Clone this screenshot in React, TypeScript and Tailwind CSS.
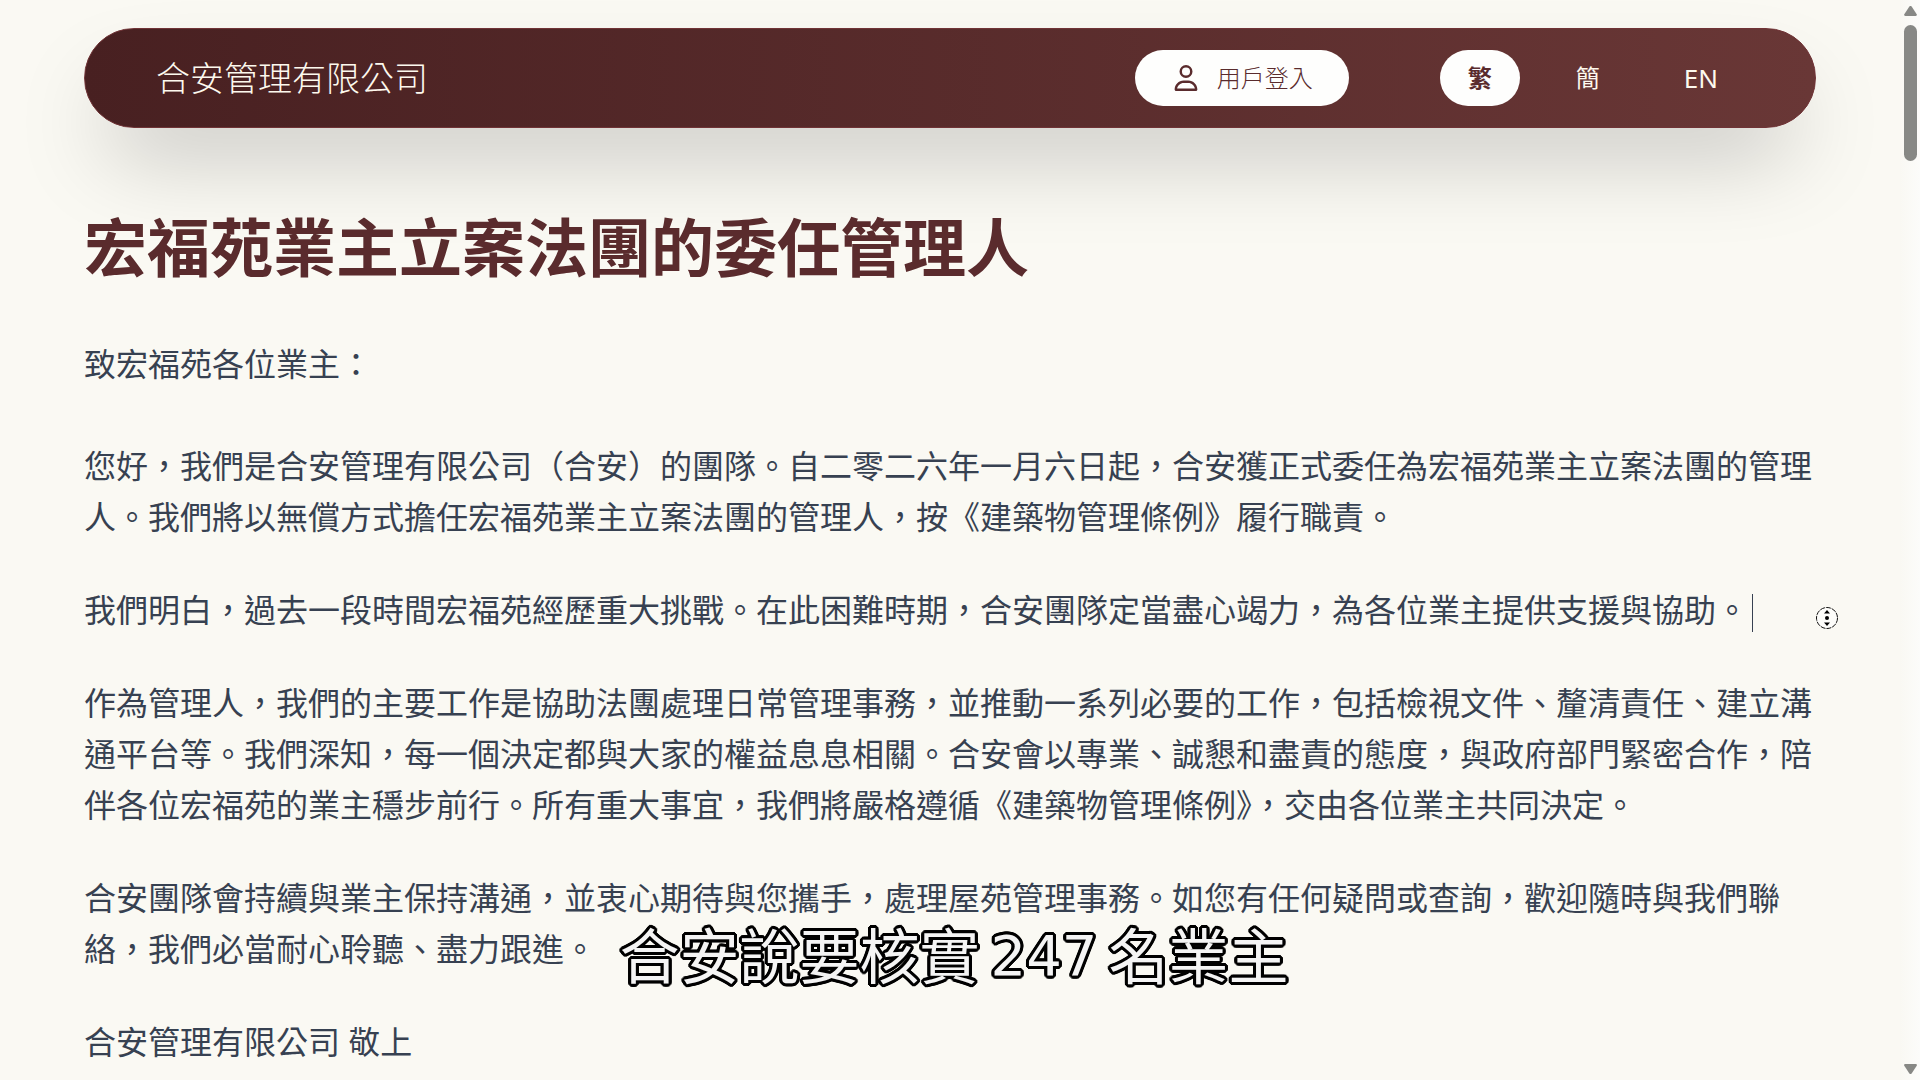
import React, { useState } from 'react';
import { FaRegUser } from 'react-icons/fa6';

const LANGUAGES = [
  { id: 'tc', label: '繁' },
  { id: 'sc', label: '簡' },
  { id: 'en', label: 'EN' },
];

const PARAGRAPHS = [
  '您好，我們是合安管理有限公司（合安）的團隊。自二零二六年一月六日起，合安獲正式委任為宏福苑業主立案法團的管理人。我們將以無償方式擔任宏福苑業主立案法團的管理人，按《建築物管理條例》履行職責。',
  '我們明白，過去一段時間宏福苑經歷重大挑戰。在此困難時期，合安團隊定當盡心竭力，為各位業主提供支援與協助。',
  '作為管理人，我們的主要工作是協助法團處理日常管理事務，並推動一系列必要的工作，包括檢視文件、釐清責任、建立溝通平台等。我們深知，每一個決定都與大家的權益息息相關。合安會以專業、誠懇和盡責的態度，與政府部門緊密合作，陪伴各位宏福苑的業主穩步前行。所有重大事宜，我們將嚴格遵循《建築物管理條例》，交由各位業主共同決定。',
  '合安團隊會持續與業主保持溝通，並衷心期待與您攜手，處理屋苑管理事務。如您有任何疑問或查詢，歡迎隨時與我們聯絡，我們必當耐心聆聽、盡力跟進。',
  '合安管理有限公司 敬上',
];

const CARET_PARAGRAPH = 1;

const Header: React.FC = () => {
  const [lang, setLang] = useState('tc');

  return (
    <header className="flex items-center justify-between rounded-full border border-[#703336] bg-gradient-to-r from-[#482021] to-[#693736] h-[100px] pl-[71px] pr-[69px] text-[#fdf9ee] shadow-[0_44px_88px_-21px_rgba(0,0,0,0.25)]">
      <a href="#" className="text-[34px] leading-[56px] font-light">合安管理有限公司</a>
      <div className="flex items-center gap-[91px]">
        <button className="flex h-14 items-center gap-[18px] rounded-full bg-[#fefefd] pl-[38px] pr-9 text-2xl font-light text-[#5a2b2d]">
          <FaRegUser className="size-[26px]" />
          用戶登入
        </button>
        <nav className="flex items-center gap-7">
          {LANGUAGES.map(item => (
            <button
              key={item.id}
              onClick={() => setLang(item.id)}
              className={`h-14 rounded-full px-7 ${item.id === 'en' ? 'text-[26px]' : 'text-2xl'} ${lang === item.id ? 'bg-[#fefefd] font-bold text-[#5a2b2d]' : 'font-normal'}`}
            >
              {item.label}
            </button>
          ))}
        </nav>
      </div>
    </header>
  );
};

const Scrollbar: React.FC = () => (
  <div className="flex w-5 shrink-0 flex-col items-end bg-gradient-to-r from-[#f9f8f3] to-[#fcfcfa] pr-[3px] text-[#878885]">
    <svg viewBox="0 0 13 10" className="mt-1.5 h-[10px] w-[13px]" fill="currentColor">
      <path d="M5.2.8a1.6 1.6 0 0 1 2.6 0l4.9 7.4c.5.8 0 1.8-1 1.8H1.3c-1 0-1.5-1-1-1.8z" />
    </svg>
    <div className="mt-[9px] h-[136px] w-[13px] rounded-full bg-[#878885]" />
    <svg viewBox="0 0 13 10" className="mt-auto mb-1.5 h-[10px] w-[13px]" fill="currentColor">
      <path d="M5.2 9.2a1.6 1.6 0 0 0 2.6 0l4.9-7.4c.5-.8 0-1.8-1-1.8H1.3c-1 0-1.5 1-1 1.8z" />
    </svg>
  </div>
);

const ScrollCursor: React.FC = () => (
  <svg viewBox="0 0 22 22" className="absolute top-[607px] right-[82px] size-[22px]">
    <circle cx="11" cy="11" r="10.5" fill="#fff" fillOpacity="0.6" stroke="#111" strokeWidth="1" strokeDasharray="5 1" />
    <circle cx="11" cy="11" r="2" fill="#000" />
    <path d="M11 3l3 3.5H8zM11 19l3-3.5H8z" fill="#000" />
  </svg>
);

// rounded black outline built from shadows in every direction
const Caption: React.FC = () => (
  <div className="absolute inset-x-0 top-[911px] flex items-center justify-center gap-[11px] pr-3 text-[60px] leading-[90px] font-normal text-[#f4f4f4] [text-shadow:3px_0_#000,-3px_0_#000,0_3px_#000,0_-3px_#000,3px_1px_#000,3px_-1px_#000,-3px_1px_#000,-3px_-1px_#000,1px_3px_#000,-1px_3px_#000,1px_-3px_#000,-1px_-3px_#000,2px_2px_#000,-2px_2px_#000,2px_-2px_#000,-2px_-2px_#000,1px_1px_#000,-1px_-1px_#000]">
    <span>合安說要核實</span>
    <span className="font-['DejaVu_Sans',sans-serif] text-[56px]">247</span>
    <span>名業主</span>
  </div>
);

const App: React.FC = () => {
  return (
    <div className="relative flex min-h-screen bg-[#faf9f3] font-['Noto_Sans','Noto_Sans_CJK_TC',sans-serif]" lang="zh-Hant">
      <main className="min-w-0 flex-1 px-[84px] pt-7">
        <Header />
        <h1 className="mt-[74px] text-[63px] leading-[90px] font-bold text-[#5a2b2d]">
          宏福苑業主立案法團的委任管理人
        </h1>
        <article className="mt-[46px] text-[32px] leading-[51px] text-[#374151]">
          <p className="mb-[51px]">致宏福苑各位業主：</p>
          <div className="flex flex-col gap-[42px]">
            {PARAGRAPHS.map((text, i) => (
              <p key={text}>
                {text}
                {i === CARET_PARAGRAPH && <span className="ml-1 inline-block h-[38px] w-px bg-[#374151] align-middle" />}
              </p>
            ))}
          </div>
        </article>
      </main>
      <Scrollbar />
      <ScrollCursor />
      <Caption />
    </div>
  );
};

export default App;
